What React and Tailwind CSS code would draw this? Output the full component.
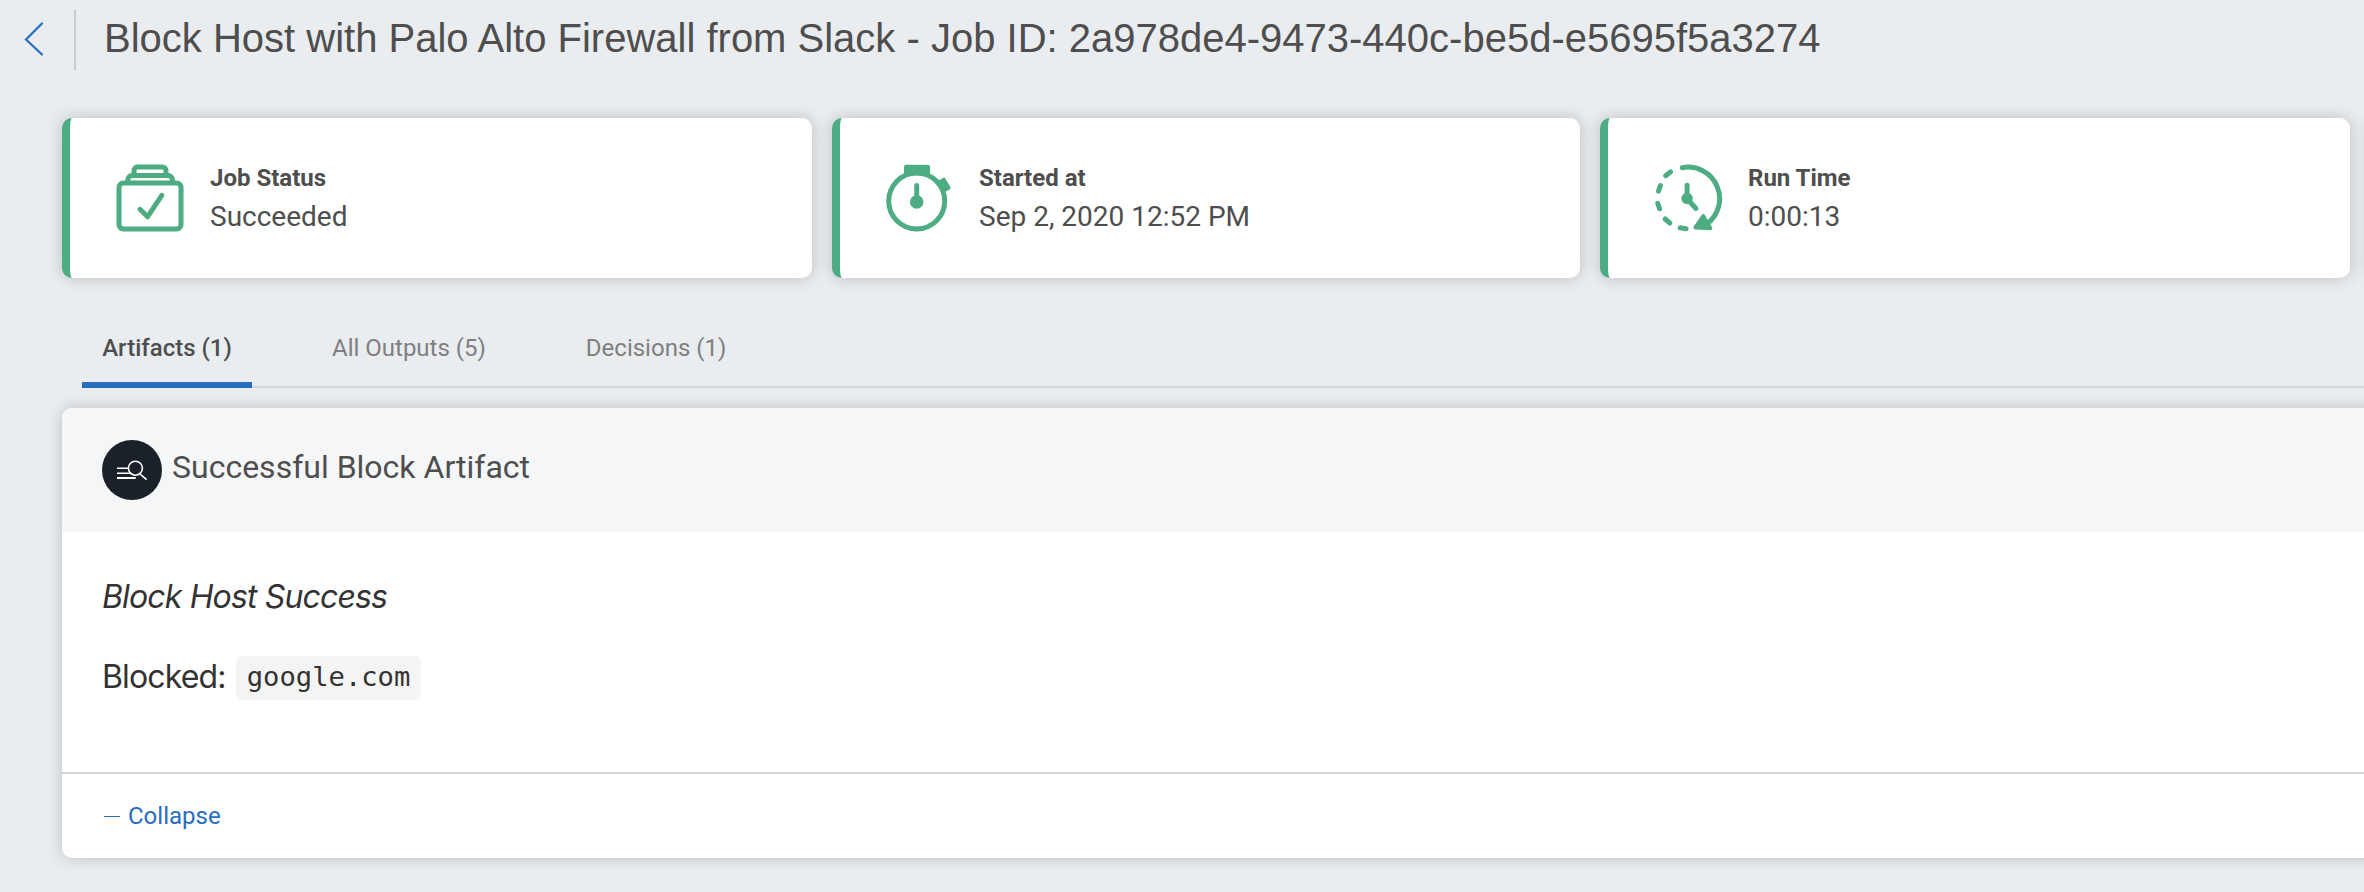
const JobStatusIcon = () => (
  <svg width="70" height="70" viewBox="0 0 70 70" fill="none" stroke="#4dac82" strokeWidth="5" strokeLinecap="round" strokeLinejoin="round" className="block shrink-0">
    <rect x="4" y="20" width="62" height="46" rx="4.5" />
    <path d="M12.8 18.5V17a4.500 4.500 0 0 1 4.500-4.500H53a4.500 4.500 0 0 1 4.500 4.500V18.500" strokeLinecap="butt" />
    <path d="M19 11V7.500a3.500 3.500 0 0 1 3.500-3.500H47.500a3.500 3.500 0 0 1 3.500 3.500V11" strokeLinecap="butt" />
    <path d="M25 46.300l7.500 7.500L46.800 32.300" />
  </svg>
);

const StopwatchIcon = () => (
  <svg width="70" height="70" viewBox="0 0 70 70" fill="#4dac82" className="block shrink-0">
    <circle cx="32.7" cy="38" r="28" fill="none" stroke="#4dac82" strokeWidth="5" />
    <rect x="20" y="1.700" width="26" height="10.500" rx="2" />
    <rect x="55.500" y="15.500" width="9" height="13" rx="1.500" transform="rotate(-30 60 22)" />
    <path d="M32.700 22.500V38" stroke="#4dac82" strokeWidth="5" strokeLinecap="round" />
    <circle cx="32.700" cy="39" r="6.800" />
  </svg>
);

const RunTimeIcon = () => (
  <svg width="70" height="70" viewBox="0 0 70 70" fill="none" stroke="#4dac82" strokeWidth="5" strokeLinecap="round" strokeLinejoin="round" className="block shrink-0">
    <path d="M29.300 4.700A31.500 31.500 0 0 1 54.500 60.500" />
    <path d="M17.600 8.800L12.600 12.700M7.400 22.600L5.500 28.100M4.700 40.300L6.600 45.800M12.100 56L16.900 60M27.200 64.800L33 65.800" />
    <path d="M34.100 22.300V36L43 45.500" />
    <circle cx="34.100" cy="35.500" r="5.700" fill="#4dac82" stroke="none" />
    <path d="M50.300 53.200L57.300 65.300L42.500 64.500Z" fill="#4dac82" strokeWidth="4" />
  </svg>
);

const ArtifactIcon = () => (
  <svg width="60" height="60" viewBox="0 0 60 60" fill="none" stroke="#fff" strokeWidth="1.600" className="block">
    <circle cx="30" cy="30" r="30" fill="#1a2128" stroke="none" />
    <path d="M15 28.300h11M15 33.300h14" />
    <path d="M15 38h18.700" strokeWidth="2" />
    <circle cx="33.400" cy="28.200" r="7" />
    <path d="M38 34l6.600 5.700" />
  </svg>
);

const stats = [
  { icon: JobStatusIcon, label: "Job Status", value: "Succeeded", inset: "pl-[45px]" },
  { icon: StopwatchIcon, label: "Started at", value: "Sep 2, 2020 12:52 PM", inset: "pl-11" },
  { icon: RunTimeIcon, label: "Run Time", value: "0:00:13", inset: "pl-[45px]" },
];

const cardShadow = "shadow-[0_0_16px_rgba(0,0,0,0.2)]";

function StatCard({ icon: Icon, label, value, inset }) {
  return (
    <section className={`flex h-[160px] items-center rounded-[10px] border-l-8 border-[#4dac82] bg-white ${inset} ${cardShadow}`}>
      <Icon />
      <div className="ml-[25px] pt-[3px] text-[#4e4e4e]">
        <div className="text-2xl leading-8 font-bold">{label}</div>
        <div className="mt-[3px] text-[28px] leading-10">{value}</div>
      </div>
    </section>
  );
}

export default function App() {
  return (
    <div className="h-[892px] w-[2364px] overflow-hidden bg-[#e9edf0] font-['Roboto',sans-serif]">
      <header className="flex h-[118px] pt-2.5">
        <svg width="74" height="60" viewBox="0 0 74 60" fill="none" stroke="#276ec2" strokeWidth="2.200" strokeLinecap="round" className="shrink-0">
          <path d="M42 13.500L26 29.500L42 44.500" />
        </svg>
        <div className="h-[60px] w-0.5 bg-[#c6cacd]" />
        <h1 className="ml-[28px] pt-[3px] text-[40px] leading-[50px] whitespace-nowrap text-[#4e4e4e] font-['Liberation_Sans',sans-serif]">
          Block Host with Palo Alto Firewall from Slack - Job ID: 2a978de4-9473-440c-be5d-e5695f5a3274
        </h1>
      </header>

      <div className="ml-[62px] grid w-[3058px] grid-cols-[750px_748px_750px_750px] gap-5">
        {stats.map((stat) => (
          <StatCard key={stat.label} {...stat} />
        ))}
        <div className={`h-[160px] rounded-[10px] bg-white ${cardShadow}`} />
      </div>

      <nav className="mt-[30px] ml-[82px] flex h-20 border-b-2 border-[#d2d6d9] text-2xl text-[#808080]">
        <div className="flex h-20 w-[170px] justify-center border-b-[6px] border-[#276ec2] pt-6 leading-8 font-medium text-[#4e4e4e]">Artifacts (1)</div>
        <div className="ml-20 pt-6 leading-8">All Outputs (5)</div>
        <div className="ml-[100px] pt-6 leading-8">Decisions (1)</div>
      </nav>

      <article className={`mt-5 ml-[62px] h-[450px] w-[2400px] overflow-hidden rounded-[10px] bg-white ${cardShadow}`}>
        <header className="flex h-[124px] bg-[#f4f6f8] pt-8 pl-10">
          <ArtifactIcon />
          <h2 className="ml-2.5 pt-[7px] text-[32px] leading-10 text-[#4e4e4e]">Successful Block Artifact</h2>
        </header>
        <div className="h-[240px] pt-11 pl-10 text-[32px] leading-[42px] tracking-[-0.85px] text-[#333] font-['Inter',sans-serif]">
          <p className="italic">Block Host Success</p>
          <p className="mt-[38px] flex h-11 items-start leading-[42px]">
            Blocked:
            <code className="ml-2.5 h-11 rounded-md bg-[#f4f4f4] px-[11px] text-[27.2px] leading-[42px] tracking-normal font-['DejaVu_Sans_Mono',monospace]">google.com</code>
          </p>
        </div>
        <footer className="flex h-[86px] items-center border-t-2 border-[#d2d6d9] pl-[42px] text-2xl text-[#276ec2]">
          <span className="h-px w-4 bg-[#276ec2]" />
          <span className="ml-2">Collapse</span>
        </footer>
      </article>
    </div>
  );
}
